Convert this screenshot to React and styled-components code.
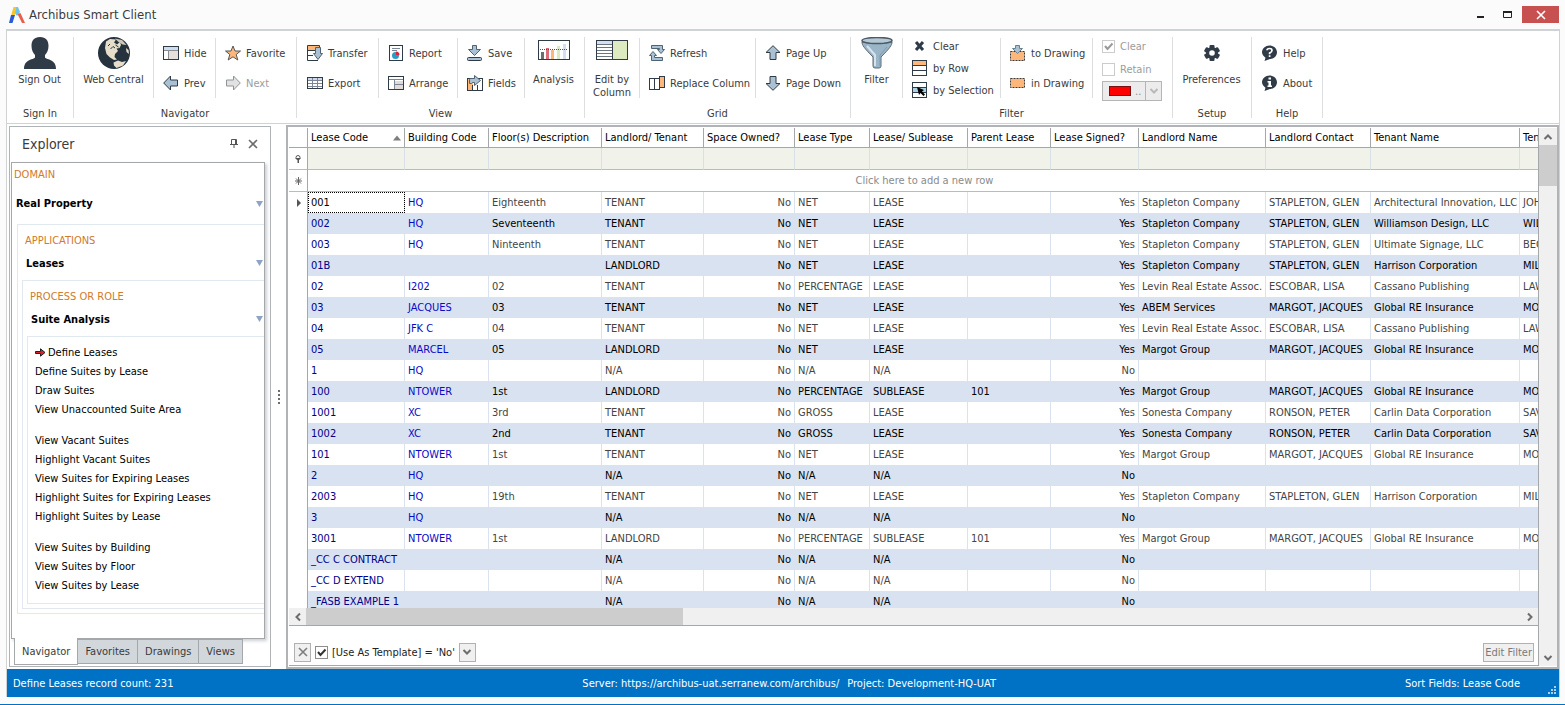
import { useState } from "react";
import styled, { createGlobalStyle, css } from "styled-components";

const Ink = "#2f3b47";
const Steel = "#a9c1d3";
const Orange = "#fdb77a";

const COLUMNS = [
    { title: "Lease Code", width: 97, sorted: true },
    { title: "Building Code", width: 84 },
    { title: "Floor(s) Description", width: 113 },
    { title: "Landlord/ Tenant", width: 102 },
    { title: "Space Owned?", width: 91, right: true },
    { title: "Lease Type", width: 75 },
    { title: "Lease/ Sublease", width: 98 },
    { title: "Parent Lease", width: 83 },
    { title: "Lease Signed?", width: 88, right: true },
    { title: "Landlord Name", width: 127 },
    { title: "Landlord Contact", width: 105 },
    { title: "Tenant Name", width: 149 },
    { title: "Ten" },
];

const ROWS = [
    ["001", "HQ", "Eighteenth", "TENANT", "No", "NET", "LEASE", "", "Yes", "Stapleton Company", "STAPLETON, GLEN", "Architectural Innovation, LLC", "JOH"],
    ["002", "HQ", "Seventeenth", "TENANT", "No", "NET", "LEASE", "", "Yes", "Stapleton Company", "STAPLETON, GLEN", "Williamson Design, LLC", "WIL"],
    ["003", "HQ", "Ninteenth", "TENANT", "No", "NET", "LEASE", "", "Yes", "Stapleton Company", "STAPLETON, GLEN", "Ultimate Signage, LLC", "BEC"],
    ["01B", "", "", "LANDLORD", "No", "NET", "LEASE", "", "Yes", "Stapleton Company", "STAPLETON, GLEN", "Harrison Corporation", "MIL"],
    ["02", "I202", "02", "TENANT", "No", "PERCENTAGE", "LEASE", "", "Yes", "Levin Real Estate Assoc.", "ESCOBAR, LISA", "Cassano Publishing", "LAW"],
    ["03", "JACQUES", "03", "TENANT", "No", "NET", "LEASE", "", "Yes", "ABEM Services", "MARGOT, JACQUES", "Global RE Insurance", "MO"],
    ["04", "JFK C", "04", "TENANT", "No", "NET", "LEASE", "", "Yes", "Levin Real Estate Assoc.", "ESCOBAR, LISA", "Cassano Publishing", "LAW"],
    ["05", "MARCEL", "05", "LANDLORD", "No", "NET", "LEASE", "", "Yes", "Margot Group", "MARGOT, JACQUES", "Global RE Insurance", "MO"],
    ["1", "HQ", "", "N/A", "No", "N/A", "N/A", "", "No", "", "", "", ""],
    ["100", "NTOWER", "1st", "LANDLORD", "No", "PERCENTAGE", "SUBLEASE", "101", "Yes", "Margot Group", "MARGOT, JACQUES", "Global RE Insurance", "MO"],
    ["1001", "XC", "3rd", "TENANT", "No", "GROSS", "LEASE", "", "Yes", "Sonesta Company", "RONSON, PETER", "Carlin Data Corporation", "SAV"],
    ["1002", "XC", "2nd", "TENANT", "No", "GROSS", "LEASE", "", "Yes", "Sonesta Company", "RONSON, PETER", "Carlin Data Corporation", "SAV"],
    ["101", "NTOWER", "1st", "TENANT", "No", "NET", "LEASE", "", "Yes", "Margot Group", "MARGOT, JACQUES", "Global RE Insurance", "MO"],
    ["2", "HQ", "", "N/A", "No", "N/A", "N/A", "", "No", "", "", "", ""],
    ["2003", "HQ", "19th", "TENANT", "No", "NET", "LEASE", "", "Yes", "Stapleton Company", "STAPLETON, GLEN", "Harrison Corporation", "MIL"],
    ["3", "HQ", "", "N/A", "No", "N/A", "N/A", "", "No", "", "", "", ""],
    ["3001", "NTOWER", "1st", "LANDLORD", "No", "PERCENTAGE", "SUBLEASE", "101", "Yes", "Margot Group", "MARGOT, JACQUES", "Global RE Insurance", "MO"],
    ["_CC C CONTRACT", "", "", "N/A", "No", "N/A", "N/A", "", "No", "", "", "", ""],
    ["_CC D EXTEND", "", "", "N/A", "No", "N/A", "N/A", "", "No", "", "", "", ""],
    ["_FASB EXAMPLE 1", "", "", "N/A", "No", "N/A", "N/A", "", "No", "", "", "", ""],
];

const TASKS = [
    ["Define Leases", "Define Suites by Lease", "Draw Suites", "View Unaccounted Suite Area"],
    [
        "View Vacant Suites",
        "Highlight Vacant Suites",
        "View Suites for Expiring Leases",
        "Highlight Suites for Expiring Leases",
        "Highlight Suites by Lease",
    ],
    ["View Suites by Building", "View Suites by Floor", "View Suites by Lease"],
];

/**
 * ICONS START
 */
const Svg = ({ w = 16, h = 16, children }) => (
    <svg width={w} height={h} viewBox={`0 0 ${w} ${h}`} fill="none" aria-hidden="true">
        {children}
    </svg>
);

const LogoIcon = () => (
    <Svg w={16} h={16}>
        <path d="M5 0H9L11 5L8 9L5 5Z" fill="#6cc5ee" />
        <path d="M4.500 0H7.500L5.500 9H2Z" fill="#f7c52c" />
        <path d="M2 8H6L3.500 16H0Z" fill="#2a5bd7" />
        <path d="M8.500 7L11.500 6L16 16H13Z" fill="#e8604c" />
    </Svg>
);

const UserIcon = () => (
    <Svg w={32} h={32}>
        <path
            d="M16 0C22 0 24.500 3.500 24.500 9C24.500 13 23 16 21 18V20.500C23 23 32 22 32 32H0C0 22 9 23 11 20.500V18C9 16 7.500 13 7.500 9C7.500 3.500 10 0 16 0Z"
            fill={Ink}
        />
    </Svg>
);

const GlobeIcon = () => (
    <Svg w={32} h={32}>
        <circle cx="16" cy="16" r="16" fill="#26333f" />
        <path
            d="M8 4.500L12 2L18 2.500L16 5.500L19 7.500L22 5L23 8L21.500 11L18.500 11.500L20 14L17 17L16.500 20L19 22.500L16 23L12 20.500L8.500 17L7 11Z"
            fill="#e6decb"
        />
        <path d="M17 1.500L24 3L28.500 8L24.500 7.500L20 4.500Z" fill="#cfc8b6" />
        <path d="M15.500 25.500L20 23.500L24 25L28 24L25 28.500L18.500 31L16 28.500Z" fill="#e6decb" />
        <path d="M28 11L30.500 13L31 17L28.500 15Z" fill="#e6decb" />
        <path d="M10 9L12 7M12.500 12L15 9.500L17 11M17.500 8L20.500 10" stroke="#26333f" />
    </Svg>
);

const HideIcon = () => (
    <Svg>
        <rect x="0.500" y="1.500" width="15" height="13" fill="#fff" stroke={Ink} />
        <rect x="1" y="2" width="14" height="3" fill="#ccdcf4" />
        <rect x="6" y="6" width="9" height="8" fill="#e6e0dc" />
        <path d="M1 5.500H15M5.500 6V14" stroke="#8c8c8c" />
    </Svg>
);

const ArrowIcon = ({ turn = 0, disabled }) => (
    <Svg>
        <path
            d="M0.700 8L7.500 1V5H14.500V11H7.500V15Z"
            fill={disabled ? "#e2e2e2" : Steel}
            stroke={disabled ? "#8f9498" : Ink}
            transform={`rotate(${turn} 8 8)`}
        />
    </Svg>
);

const StarIcon = () => (
    <Svg>
        <path d="M8 1L10 6H15.500L11.200 9.500L12.800 15L8 11.800L3.200 15L4.800 9.500L0.500 6H6Z" fill={Orange} stroke="#555" />
    </Svg>
);

const TransferIcon = () => (
    <Svg>
        <path d="M11 15.500H0.500V0.500H12.500V4" fill="#fff" stroke={Ink} />
        <rect x="1" y="1" width="11" height="4" fill={Orange} />
        <path d="M1 5.500H8M1 10.500H6" stroke={Ink} />
        <path d="M8.500 2.500H13.500V8.500H15.500L11 14.500L6.500 8.500H8.500Z" fill={Steel} stroke="#4e6475" />
    </Svg>
);

const ExportIcon = () => (
    <Svg>
        <rect x="0.500" y="2.500" width="15" height="11" fill="#fff" stroke={Ink} />
        <rect x="1" y="3" width="14" height="2" fill="#cdd9ea" />
        <path d="M1 5.500H15M1 8.500H15M1 11.500H15M5.500 3V13M10.500 3V13" stroke="#7b8794" />
        <rect x="0.500" y="2.500" width="15" height="11" stroke={Ink} />
    </Svg>
);

const ReportIcon = () => (
    <Svg>
        <rect x="1.500" y="0.500" width="13" height="15" fill="#fff" stroke={Ink} />
        <path d="M4 3.500H12M4 5.500H9" stroke="#7b8794" />
        <circle cx="7.500" cy="10.500" r="3.500" fill="#2b9bc4" />
        <path d="M8 10V6.500A3.500 3.500 0 0 1 11.500 10Z" fill="#d9263a" />
    </Svg>
);

const ArrangeIcon = () => (
    <Svg>
        <rect x="0.500" y="1.500" width="15" height="13" fill="#fff" stroke={Ink} />
        <rect x="7" y="6" width="8" height="8" fill="#dedbd9" />
        <path d="M1 4.500H15M6.500 5V14M7 9.500H15" stroke="#7b8794" />
    </Svg>
);

const SaveIcon = () => (
    <Svg>
        <path d="M5.500 0.500H9.500V4.500H13.500L7.500 10.500L1.500 4.500H5.500Z" fill={Steel} stroke="#4e6475" />
        <rect x="0.500" y="12.500" width="14" height="3" rx="1" fill={Steel} stroke={Ink} />
    </Svg>
);

const FieldsIcon = () => (
    <Svg>
        <rect x="0.500" y="3.500" width="15" height="12" fill="#fff" stroke={Ink} />
        <rect x="1" y="4" width="5" height="11" fill={Orange} />
        <path d="M5.500 10V15M10.500 10V15" stroke={Ink} />
        <path d="M2.500 8.500V4.500Q2.500 3.500 4 3.500H7.500V0.500L13.500 5.500L7.500 10.500V7.500H5.500L4.500 8.500Z" fill={Steel} stroke="#4e6475" />
    </Svg>
);

const AnalysisIcon = () => (
    <Svg w={32} h={32}>
        <rect x="0.500" y="3.500" width="31" height="19" fill="#fff" stroke={Ink} />
        <rect x="3" y="15" width="3" height="7" fill="#6d6d6d" />
        <rect x="8" y="11" width="3" height="11" fill="#dc6b7b" />
        <rect x="13" y="13" width="3" height="9" fill="#fdb77a" />
        <rect x="19" y="9" width="3" height="13" fill="#d9ebc0" />
        <rect x="25" y="7" width="3" height="15" fill="#d4dff2" />
        <path d="M2 12.500H30" stroke="#4b5056" strokeDasharray="1 1" />
    </Svg>
);

const EditColumnIcon = () => (
    <Svg w={32} h={32}>
        <rect x="0.500" y="3.500" width="31" height="19" fill="#fff" stroke={Ink} />
        <rect x="1" y="4" width="15" height="3" fill="#d4dff2" />
        <rect x="17" y="4" width="14" height="18" fill="#dcecc0" />
        <path d="M1 7.500H16M1 10.500H16M1 13.500H16M1 16.500H16M1 19.500H16" stroke="#6b757e" />
        <path d="M16.500 4V22" stroke={Ink} />
    </Svg>
);

const RefreshIcon = () => (
    <Svg>
        <path d="M2.500 0.500H13.500V4.500H15.500L12 8.500L8.500 4.500H10.500V3.500H2.500Z" fill={Steel} stroke="#4e6475" />
        <path d="M13.500 15.500H2.500V10.500H0.500L4 6.500L7.500 10.500H5.500V12.500H13.500Z" fill={Steel} stroke="#4e6475" />
    </Svg>
);

const ReplaceIcon = () => (
    <Svg>
        <rect x="0.500" y="3.500" width="5" height="11" fill="#fff" stroke={Ink} />
        <rect x="5.500" y="3.500" width="5" height="11" fill="#fff" stroke={Ink} />
        <rect x="10.500" y="1.500" width="5" height="11" fill={Orange} stroke={Ink} />
    </Svg>
);

const FunnelIcon = () => (
    <Svg w={32} h={32}>
        <path d="M1 5C1 8 3 11 12 20V29Q12 31 14 31H18Q20 31 20 29V20C29 11 31 8 31 5Z" fill="#9bb5c8" stroke="#5b6b77" />
        <ellipse cx="16" cy="3.500" rx="15" ry="3" fill="#b4c8d6" stroke="#4b5a66" strokeWidth="1.500" />
        <path d="M6 9L14 18V29" stroke="#d7e3ec" strokeWidth="2" />
        <path d="M26 10L19 18V29" stroke="#7f9bb0" />
    </Svg>
);

const ClearIcon = () => (
    <Svg>
        <path d="M4 4L11 12M11 4L4 12" stroke={Ink} strokeWidth="3" />
    </Svg>
);

const ByRowIcon = () => (
    <Svg>
        <rect x="0.500" y="0.500" width="14" height="15" fill="#fff" stroke={Ink} />
        <rect x="1" y="1" width="13" height="4" fill={Orange} />
        <path d="M1 5.500H14M1 10.500H14" stroke={Ink} />
    </Svg>
);

const BySelectionIcon = () => (
    <Svg>
        <rect x="0.500" y="0.500" width="14" height="15" fill="#fff" stroke={Ink} />
        <rect x="1" y="6" width="13" height="4" fill="#a9d3e4" />
        <path d="M1 5.500H14M1 10.500H14" stroke={Ink} />
        <path d="M5 5L12 8L10 9.500L13 12.500L11.500 14L8.500 11L7 13Z" fill="#000" />
    </Svg>
);

const ToDrawingIcon = () => (
    <Svg>
        <rect x="0.500" y="6.500" width="14" height="9" fill={Orange} stroke="#3b3b3b" strokeDasharray="2 1" />
        <path d="M5.500 0.500H9.500V3.500H12.500L7.500 8.500L2.500 3.500H5.500Z" fill={Steel} stroke="#6a7f8f" />
    </Svg>
);

const InDrawingIcon = () => (
    <Svg>
        <rect x="0.500" y="3.500" width="14" height="9" fill={Orange} stroke="#3b3b3b" strokeDasharray="2 1" />
    </Svg>
);

const GearIcon = () => (
    <Svg w={32} h={32}>
        {[0, 60, 120].map((a) => (
            <rect key={a} x="13.500" y="8" width="5" height="16" rx="1" fill={Ink} transform={`rotate(${a} 16 16)`} />
        ))}
        <circle cx="16" cy="16" r="6" fill={Ink} />
        <circle cx="16" cy="16" r="2.800" fill="#fff" />
    </Svg>
);

const BubbleIcon = ({ info }) => (
    <Svg>
        <path d="M7.500 0.500C11.500 0.500 15 3.500 15 7.300C15 11 12 14 8 14L2.500 16L3.500 12.700C1.500 11.500 0 9.500 0 7.300C0 3.500 3.500 0.500 7.500 0.500Z" fill={Ink} />
        {info ? (
            <path d="M6.500 2.500H9V4.500H6.500ZM5.500 6H9V10.500H10V12H5.500V10.500H6.500V7.500H5.500Z" fill="#fff" />
        ) : (
            <path d="M5 5.200Q5 3.500 7.500 3.500T10 5.500Q10 7 7.600 8V9.200M7.600 10.200V12" stroke="#fff" strokeWidth="1.700" />
        )}
    </Svg>
);

const Chevron = ({ turn = 0, color = "#6d6d6d" }) => (
    <Svg w={10} h={10}>
        <path d="M1.500 3L5 6.500L8.500 3" stroke={color} strokeWidth="2" transform={`rotate(${turn} 5 5)`} />
    </Svg>
);

const CloseIcon = ({ color = "#6d6d6d" }) => (
    <Svg w={10} h={10}>
        <path d="M1 1L9 9M9 1L1 9" stroke={color} strokeWidth="1.600" />
    </Svg>
);

const PinIcon = () => (
    <Svg w={8} h={9}>
        <path d="M1.500 0.500H6.500V5.500H1.500ZM0 5.500H8M4 6V9" stroke="#555" />
        <path d="M5.500 1V5" stroke="#555" />
    </Svg>
);

const MinimizeIcon = () => (
    <Svg w={10} h={10}>
        <rect x="2" y="6" width="7" height="2" fill="#222" />
    </Svg>
);

const MaximizeIcon = () => (
    <Svg w={10} h={10}>
        <path d="M0.500 1V7.500H8.500V1" stroke="#222" />
        <rect x="0" y="1" width="9" height="2" fill="#222" />
    </Svg>
);

const TriangleIcon = ({ up, color = "#8ea3c8" }) => (
    <Svg w={8} h={6}>
        <path d={up ? "M0 5.500L4 0.500L8 5.500Z" : "M0 0H7L3.500 6Z"} fill={color} />
    </Svg>
);

const CurrentTaskIcon = () => (
    <Svg w={11} h={9}>
        <path d="M0.500 3.500H5.500V0.800L10 4.500L5.500 8.200V5.500H0.500Z" fill="#d8232a" stroke="#222" />
    </Svg>
);

const FilterRowIcon = () => (
    <Svg w={8} h={8}>
        <circle cx="4" cy="2.500" r="2" fill="#fff" stroke="#555" />
        <path d="M1 3H7L5 5V8H3.500V5Z" fill="#555" />
    </Svg>
);

const NewRowIcon = () => (
    <Svg w={8} h={8}>
        <path d="M4.500 0V8M1 4H8M2 1.500L7 6.500M7 1.500L2 6.500" stroke="#666" />
    </Svg>
);

const PointerIcon = () => (
    <Svg w={5} h={8}>
        <path d="M1 0L5 4L1 8Z" fill="#555" />
    </Svg>
);

const GripIcon = () => (
    <Svg w={8} h={8}>
        {[[6, 0], [3, 3], [6, 3], [0, 6], [3, 6], [6, 6]].map(([x, y]) => (
            <rect key={`${x}-${y}`} x={x} y={y} width="2" height="2" fill="#a9d0ee" />
        ))}
    </Svg>
);

const SplitterIcon = () => (
    <Svg w={3} h={14}>
        {[0, 4, 8, 12].map((y) => (
            <rect key={y} x="1" y={y} width="2" height="2" fill="#6d6d6d" />
        ))}
    </Svg>
);
/**
 * ICONS END
 */

function Command({ icon, disabled, children }) {
    return (
        <CommandButton type="button" disabled={disabled}>
            {icon}
            <span>{children}</span>
        </CommandButton>
    );
}

function LargeCommand({ icon, children }) {
    return (
        <LargeButton type="button">
            {icon}
            <span>{children}</span>
        </LargeButton>
    );
}

function Tick({ id, checked, onChange, disabled }) {
    return (
        <TickBox>
            <input id={id} type="checkbox" checked={checked} onChange={onChange} disabled={disabled} readOnly={!onChange} />
            {checked && (
                <svg width="13" height="13" viewBox="0 0 13 13" fill="none" aria-hidden="true">
                    <path d="M3 6L5.500 9L10.500 3.500" stroke={disabled ? "#9a9a9a" : "#333"} strokeWidth="2" />
                </svg>
            )}
        </TickBox>
    );
}

function Ribbon() {
    return (
        <RibbonBar>
            <Group $width={67}>
                <Sections>
                    <Section $width={65}>
                        <LargeCommand icon={<UserIcon />}>Sign Out</LargeCommand>
                    </Section>
                </Sections>
                <GroupTitle>Sign In</GroupTitle>
            </Group>
            <Group $width={223}>
                <Sections>
                    <Section $width={79}>
                        <LargeCommand icon={<GlobeIcon />}>Web Central</LargeCommand>
                    </Section>
                    <Section $width={62} $pad={9}>
                        <Command icon={<HideIcon />}>Hide</Command>
                        <Command icon={<ArrowIcon />}>Prev</Command>
                    </Section>
                    <Section $width={81} $pad={9}>
                        <Command icon={<StarIcon />}>Favorite</Command>
                        <Command icon={<ArrowIcon turn={180} disabled />} disabled>
                            Next
                        </Command>
                    </Section>
                </Sections>
                <GroupTitle>Navigator</GroupTitle>
            </Group>
            <Group $width={288}>
                <Sections>
                    <Section $width={81} $pad={10}>
                        <Command icon={<TransferIcon />}>Transfer</Command>
                        <Command icon={<ExportIcon />}>Export</Command>
                    </Section>
                    <Section $width={79} $pad={9}>
                        <Command icon={<ReportIcon />}>Report</Command>
                        <Command icon={<ArrangeIcon />}>Arrange</Command>
                    </Section>
                    <Section $width={67} $pad={9}>
                        <Command icon={<SaveIcon />}>Save</Command>
                        <Command icon={<FieldsIcon />}>Fields</Command>
                    </Section>
                    <Section $width={58}>
                        <LargeCommand icon={<AnalysisIcon />}>Analysis</LargeCommand>
                    </Section>
                </Sections>
                <GroupTitle>View</GroupTitle>
            </Group>
            <Group $width={266}>
                <Sections>
                    <Section $width={54}>
                        <LargeCommand icon={<EditColumnIcon />}>Edit by Column</LargeCommand>
                    </Section>
                    <Section $width={116} $pad={9}>
                        <Command icon={<RefreshIcon />}>Refresh</Command>
                        <Command icon={<ReplaceIcon />}>Replace Column</Command>
                    </Section>
                    <Section $width={95} $pad={9}>
                        <Command icon={<ArrowIcon turn={90} />}>Page Up</Command>
                        <Command icon={<ArrowIcon turn={270} />}>Page Down</Command>
                    </Section>
                </Sections>
                <GroupTitle>Grid</GroupTitle>
            </Group>
            <Group $width={322}>
                <Sections>
                    <Section $width={51}>
                        <LargeCommand icon={<FunnelIcon />}>Filter</LargeCommand>
                    </Section>
                    <Section $width={98} $pad={9} $row={22}>
                        <Command icon={<ClearIcon />}>Clear</Command>
                        <Command icon={<ByRowIcon />}>by Row</Command>
                        <Command icon={<BySelectionIcon />}>by Selection</Command>
                    </Section>
                    <Section $width={92} $pad={9}>
                        <Command icon={<ToDrawingIcon />}>to Drawing</Command>
                        <Command icon={<InDrawingIcon />}>in Drawing</Command>
                    </Section>
                    <Section $width={80} $pad={9} $row={23}>
                        <Option>
                            <Tick id="clear-drawing" checked disabled />
                            <label htmlFor="clear-drawing">Clear</label>
                        </Option>
                        <Option>
                            <Tick id="retain-drawing" checked={false} disabled />
                            <label htmlFor="retain-drawing">Retain</label>
                        </Option>
                        <ColorField>
                            <Swatch />
                            <select aria-label="Highlight color" disabled>
                                <option>..</option>
                            </select>
                            <ColorArrow>
                                <Chevron color="#b9b9b9" />
                            </ColorArrow>
                        </ColorField>
                    </Section>
                </Sections>
                <GroupTitle>Filter</GroupTitle>
            </Group>
            <Group $width={79}>
                <Sections>
                    <Section $width={77}>
                        <LargeCommand icon={<GearIcon />}>Preferences</LargeCommand>
                    </Section>
                </Sections>
                <GroupTitle>Setup</GroupTitle>
            </Group>
            <Group $width={71}>
                <Sections>
                    <Section $width={70} $pad={10}>
                        <Command icon={<BubbleIcon />}>Help</Command>
                        <Command icon={<BubbleIcon info />}>About</Command>
                    </Section>
                </Sections>
                <GroupTitle>Help</GroupTitle>
            </Group>
        </RibbonBar>
    );
}

function Explorer() {
    const [tab, setTab] = useState("Navigator");
    return (
        <ExplorerPanel>
            <ExplorerHeader>
                <h2>Explorer</h2>
                <PlainButton type="button" aria-label="Pin">
                    <PinIcon />
                </PlainButton>
                <PlainButton type="button" aria-label="Close panel">
                    <CloseIcon />
                </PlainButton>
            </ExplorerHeader>
            <Tree>
                <Caption>DOMAIN</Caption>
                <Choice type="button" $tall>
                    Real Property <TriangleIcon />
                </Choice>
                <Level $gap={5}>
                    <Caption $inset>APPLICATIONS</Caption>
                    <Choice type="button" $inset>
                        Leases <TriangleIcon />
                    </Choice>
                    <Level $gap={4}>
                        <Caption $inset>PROCESS OR ROLE</Caption>
                        <Choice type="button" $inset>
                            Suite Analysis <TriangleIcon />
                        </Choice>
                        <TaskLevel>
                            {TASKS.map((group, g) => (
                                <TaskList key={group[0]}>
                                    {group.map((task, i) => (
                                        <li key={task}>
                                            <a href="#task">
                                                {g === 0 && i === 0 && <CurrentTaskIcon />}
                                                {task}
                                            </a>
                                        </li>
                                    ))}
                                </TaskList>
                            ))}
                        </TaskLevel>
                    </Level>
                </Level>
            </Tree>
            <Tabs role="tablist">
                {["Navigator", "Favorites", "Drawings", "Views"].map((name) => (
                    <Tab key={name} type="button" role="tab" aria-selected={tab === name} $active={tab === name} onClick={() => setTab(name)}>
                        {name}
                    </Tab>
                ))}
            </Tabs>
        </ExplorerPanel>
    );
}

function LeaseTable() {
    return (
        <Table>
            <colgroup>
                <col width="19" />
                {COLUMNS.map((c) => (
                    <col key={c.title} width={c.width} />
                ))}
            </colgroup>
            <thead>
                <tr>
                    <HeadCell />
                    {COLUMNS.map((c) => (
                        <HeadCell key={c.title} scope="col">
                            <HeadText>
                                {c.title}
                                {c.sorted && <TriangleIcon up color="#7d7d7d" />}
                            </HeadText>
                        </HeadCell>
                    ))}
                </tr>
                <tr>
                    <MarkCell $ruled>
                        <FilterRowIcon />
                    </MarkCell>
                    {COLUMNS.map((c) => (
                        <FilterCell key={c.title}>
                            <input aria-label={`Filter ${c.title}`} />
                        </FilterCell>
                    ))}
                </tr>
                <tr>
                    <MarkCell $ruled>
                        <NewRowIcon />
                    </MarkCell>
                    <NewRowCell colSpan={COLUMNS.length}>Click here to add a new row</NewRowCell>
                </tr>
            </thead>
            <tbody>
                {ROWS.map((row, r) => (
                    <Row key={row[0]} $alt={r % 2 === 1}>
                        <MarkCell>{r === 0 && <PointerIcon />}</MarkCell>
                        {row.map((value, c) => (
                            <Cell key={COLUMNS[c].title} $col={c} $right={COLUMNS[c].right} $focus={r === 0 && c === 0}>
                                {value}
                            </Cell>
                        ))}
                    </Row>
                ))}
            </tbody>
        </Table>
    );
}

function Grid() {
    const [applied, setApplied] = useState(true);
    return (
        <GridPanel>
            <GridMain>
                <TableView>
                    <LeaseTable />
                </TableView>
                <HScroll>
                    <ScrollButton type="button" aria-label="Scroll left">
                        <Chevron turn={90} />
                    </ScrollButton>
                    <HTrack>
                        <HThumb />
                    </HTrack>
                    <ScrollButton type="button" aria-label="Scroll right">
                        <Chevron turn={270} />
                    </ScrollButton>
                </HScroll>
                <FilterBar>
                    <SmallButton type="button" aria-label="Remove filter">
                        <CloseIcon color="#7d7d7d" />
                    </SmallButton>
                    <Tick id="use-filter" checked={applied} onChange={() => setApplied(!applied)} />
                    <label htmlFor="use-filter">[Use As Template] = 'No'</label>
                    <SmallButton type="button" aria-label="Recent filters">
                        <Chevron />
                    </SmallButton>
                    <EditButton type="button">Edit Filter</EditButton>
                </FilterBar>
            </GridMain>
            <VScroll>
                <ScrollButton type="button" aria-label="Scroll up">
                    <Chevron turn={180} />
                </ScrollButton>
                <VTrack>
                    <VThumb />
                </VTrack>
                <ScrollButton type="button" aria-label="Scroll down">
                    <Chevron />
                </ScrollButton>
            </VScroll>
        </GridPanel>
    );
}

export default function App() {
    return (
        <Page>
            <GlobalStyle />
            <TitleBar>
                <LogoIcon />
                <h1>Archibus Smart Client</h1>
                <WindowButton type="button" aria-label="Minimize">
                    <MinimizeIcon />
                </WindowButton>
                <WindowButton type="button" aria-label="Maximize">
                    <MaximizeIcon />
                </WindowButton>
                <WindowButton type="button" aria-label="Close" $close>
                    <CloseIcon color="#fff" />
                </WindowButton>
            </TitleBar>
            <Frame>
                <Ribbon />
                <Workspace>
                    <Explorer />
                    <Splitter>
                        <SplitterIcon />
                    </Splitter>
                    <Grid />
                </Workspace>
                <StatusBar>
                    <span>Define Leases record count: 231</span>
                    <StatusCenter>
                        <span>Server: https://archibus-uat.serranew.com/archibus/</span>
                        <span>Project: Development-HQ-UAT</span>
                    </StatusCenter>
                    <span>Sort Fields: Lease Code</span>
                    <Corner>
                        <GripIcon />
                    </Corner>
                </StatusBar>
            </Frame>
        </Page>
    );
}

/**
 * STYLE FOR THE COMPONENT START
 */
const GlobalStyle = createGlobalStyle`
    * { box-sizing: border-box; }
    body {
        margin: 0;
        background: #fbfbfc;
        color: #3b3b3b;
        font: 11px/13px "DejaVu Sans Condensed", "Noto Sans", sans-serif;
    }
    button, input, select { font: inherit; color: inherit; padding: 0; margin: 0; }
    svg { display: block; flex: none; }
`;

const Page = styled.div`
    height: 100vh;
    display: flex;
    flex-direction: column;
    padding-bottom: 7px;
    border-bottom: 1px solid #0072c6;
`;

const TitleBar = styled.header`
    height: 29px;
    flex: none;
    display: flex;
    align-items: center;
    padding: 0 6px 0 9px;

    h1 {
        flex: 1;
        margin: 0 0 0 4px;
        font-size: 13px;
        line-height: 16px;
        font-weight: normal;
    }
`;

const WindowButton = styled.button`
    width: ${(props) => (props.$close ? 37 : 28)}px;
    height: 17px;
    display: flex;
    justify-content: center;
    align-items: center;
    border: 0;
    background: ${(props) => (props.$close ? "#c75050" : "transparent")};
`;

const Frame = styled.div`
    flex: 1;
    min-height: 0;
    display: flex;
    flex-direction: column;
    margin: 0 5px 0 6px;
    border: 1px solid #d0d3d4;
    border-top-width: 2px;
    border-bottom: 0;
    background: #fff;
`;

const RibbonBar = styled.nav`
    flex: none;
    height: 93px;
    padding-top: 6px;
    display: flex;
    border-bottom: 1px solid #d0d3d4;
`;

const Group = styled.section`
    flex: none;
    width: ${(props) => props.$width}px;
    height: 81px;
    display: flex;
    flex-direction: column;
    justify-content: space-between;
    border-right: 1px solid #dcdee0;
`;

const Sections = styled.div`
    display: flex;
    padding-top: 1px;
`;

const GroupTitle = styled.div`
    text-align: center;
    line-height: 8px;
`;

const CommandButton = styled.button`
    flex: none;
    height: 30px;
    display: flex;
    align-items: center;
    gap: 5px;
    border: 0;
    background: transparent;
    white-space: nowrap;
    ${(props) => (props.disabled ? "color: #9c9c9c;" : "")}
`;

const Option = styled.div`
    flex: none;
    display: flex;
    align-items: center;
    gap: 5px;
    color: #9c9c9c;
`;

const Section = styled.div`
    width: ${(props) => props.$width}px;
    height: 60px;
    display: flex;
    flex-direction: column;
    justify-content: center;
    align-items: flex-start;
    padding-left: ${(props) => props.$pad || 0}px;

    & + & {
        border-left: 1px solid #dcdee0;
    }

    ${(props) =>
        props.$row &&
        css`
            ${CommandButton}, ${Option} {
                height: ${props.$row}px;
            }
        `}
`;

const LargeButton = styled.button`
    width: 100%;
    height: 62px;
    flex: none;
    display: flex;
    flex-direction: column;
    align-items: center;
    justify-content: flex-start;
    gap: 4px;
    border: 0;
    background: transparent;
`;

const TickBox = styled.span`
    position: relative;
    flex: none;
    width: 13px;
    height: 13px;

    input {
        appearance: none;
        display: block;
        width: 13px;
        height: 13px;
        border: 1px solid #8d8d8d;
        background: #fff;
    }
    input:disabled {
        border-color: #cccccc;
    }
    svg {
        position: absolute;
        top: 0;
        left: 0;
        pointer-events: none;
    }
`;

const ColorField = styled.div`
    width: 60px;
    height: 20px;
    flex: none;
    display: flex;
    align-items: center;
    border: 1px solid #b5b5b5;
    background: #ececec;

    select {
        flex: 1;
        min-width: 0;
        appearance: none;
        border: 0;
        padding-left: 4px;
        background: transparent;
        color: #8a8a8a;
        opacity: 1;
    }
`;

const Swatch = styled.span`
    width: 22px;
    height: 10px;
    margin-left: 6px;
    border: 1px solid #7a1010;
    background: #fe0000;
`;

const ColorArrow = styled.span`
    width: 16px;
    align-self: stretch;
    display: flex;
    align-items: center;
    justify-content: center;
    border-left: 1px solid #b5b5b5;
`;

const Workspace = styled.main`
    flex: 1;
    min-height: 0;
    display: flex;
`;

const ExplorerPanel = styled.aside`
    width: 262px;
    flex: none;
    margin: 2px 0 2px 2px;
    border: 1px solid #b1b4b6;
    display: flex;
    flex-direction: column;
`;

const ExplorerHeader = styled.header`
    height: 35px;
    flex: none;
    display: flex;
    align-items: center;
    gap: 10px;
    padding: 0 12px 2px;

    h2 {
        flex: 1;
        margin: 0;
        font-size: 14px;
        line-height: 18px;
        font-weight: normal;
    }
`;

const PlainButton = styled.button`
    border: 0;
    background: transparent;
`;

const Tree = styled.div`
    flex: 1;
    min-height: 0;
    margin: 0 5px 0 1px;
    padding-top: 4px;
    border: 1px solid #a5a8ab;
    box-shadow: 2px 2px 3px rgba(90, 100, 120, 0.3);
`;

const Caption = styled.div`
    padding-left: ${(props) => (props.$inset ? 7 : 2)}px;
    line-height: 16px;
    color: #d07a2b;
`;

const Choice = styled.button`
    width: 100%;
    height: ${(props) => (props.$tall ? 41 : 28)}px;
    margin-bottom: ${(props) => (props.$tall ? 0 : 3)}px;
    display: flex;
    align-items: center;
    justify-content: space-between;
    padding-left: ${(props) => (props.$inset ? 8 : 4)}px;
    border: 0;
    background: transparent;
    color: #000;
    font-weight: bold;
`;

const Level = styled.div`
    margin-left: ${(props) => props.$gap}px;
    padding: 8px 0 4px;
    border: 1px solid #e2e8ef;
    border-right: 0;
`;

const TaskLevel = styled.div`
    margin-left: 4px;
    padding: 6px 0 8px;
    border: 1px solid #e2e8ef;
    border-right: 0;
`;

const TaskList = styled.ul`
    list-style: none;
    margin: 0;
    padding: 0 0 0 7px;

    & + & {
        padding-top: 12px;
    }
    a {
        display: flex;
        align-items: center;
        gap: 2px;
        line-height: 19px;
        color: #000;
        text-decoration: none;
    }
`;

const Tabs = styled.div`
    flex: none;
    height: 27px;
    display: flex;
    align-items: flex-start;
    padding-left: 4px;
`;

const Tab = styled.button`
    position: relative;
    height: 25px;
    padding: 0 7px;
    border: 1px solid #a5a8ab;
    border-left-width: 0;
    background: #d2d7dc;

    ${(props) =>
        props.$active &&
        css`
            height: 27px;
            margin-top: -1px;
            border-left-width: 1px;
            border-top: 0;
            background: #fff;
        `}
`;

const Splitter = styled.div`
    width: 15px;
    flex: none;
    display: flex;
    align-items: center;
    justify-content: center;
`;

const GridPanel = styled.section`
    flex: 1;
    min-width: 0;
    margin-top: 1px;
    padding: 1px 0 1px 1px;
    display: flex;
    border: 2px solid #b1b4b6;
`;

const GridMain = styled.div`
    flex: 1;
    min-width: 0;
    display: flex;
    flex-direction: column;
    border: 1px solid #a5a8ab;
    border-width: 0 1px 1px 0;
`;

const TableView = styled.div`
    flex: 1;
    min-height: 0;
    overflow: hidden;
`;

const Table = styled.table`
    width: 100%;
    table-layout: fixed;
    border-collapse: separate;
    border-spacing: 0;
    white-space: nowrap;

    td, th {
        padding: 0 3px;
        overflow: hidden;
    }
    tr > :last-child {
        border-right: 0;
        padding-right: 0;
    }
`;

const HeadCell = styled.th`
    height: 20px;
    border-right: 1px solid #a5a8ab;
    border-bottom: 1px solid #a5a8ab;
    color: #000;
    font-weight: normal;
    text-align: left;
`;

const HeadText = styled.span`
    display: flex;
    align-items: center;
    justify-content: space-between;
`;

const MarkCell = styled.td`
    height: ${(props) => (props.$ruled ? 22 : 21)}px;
    border-right: 1px solid #a5a8ab;
    ${(props) => (props.$ruled ? "border-bottom: 1px solid #b9bcbf;" : "")}

    svg {
        margin: 0 auto;
    }
`;

const FilterCell = styled.td`
    border-right: 1px solid #d9e0e8;
    border-bottom: 1px solid #b9bcbf;
    background: #f1f3ea;

    input {
        display: block;
        width: 100%;
        border: 0;
        background: transparent;
    }
`;

const NewRowCell = styled.td`
    border-bottom: 1px solid #b9bcbf;
    color: #8a8a8a;
    text-align: center;
`;

const Row = styled.tr`
    color: ${(props) => (props.$alt ? "#000" : "#444")};

    td + td {
        background: ${(props) => (props.$alt ? "#d9e2f1" : "#fff")};
    }
`;

const cellColor = { 0: "#00008b", 1: "#0a0ac8" };
const Cell = styled.td`
    border-right: 1px solid #d9e2ee;
    text-align: ${(props) => (props.$right ? "right" : "left")};
    ${(props) => (cellColor[props.$col] ? `color: ${cellColor[props.$col]};` : "")}
    ${(props) => (props.$focus ? "outline: 1px dotted #000; outline-offset: -1px; color: #000;" : "")}
`;

const HScroll = styled.div`
    height: 18px;
    flex: none;
    display: flex;
    border-bottom: 1px solid #a5a8ab;
    background: #f0f0f0;
`;

const ScrollButton = styled.button`
    width: 17px;
    height: 17px;
    flex: none;
    display: flex;
    align-items: center;
    justify-content: center;
    border: 0;
    background: transparent;
`;

const HTrack = styled.div`
    flex: 1;
`;

const HThumb = styled.div`
    width: 31%;
    height: 100%;
    background: #cdcdcd;
`;

const VScroll = styled.div`
    width: 18px;
    flex: none;
    display: flex;
    flex-direction: column;
    background: #f0f0f0;
`;

const VTrack = styled.div`
    flex: 1;
`;

const VThumb = styled.div`
    width: 100%;
    height: 41px;
    background: #cdcdcd;
`;

const FilterBar = styled.div`
    height: 39px;
    flex: none;
    display: flex;
    align-items: center;
    gap: 4px;
    padding: 13px 4px 0 5px;
    color: #222;
`;

const SmallButton = styled.button`
    width: 17px;
    height: 19px;
    display: flex;
    align-items: center;
    justify-content: center;
    border: 1px solid #b1b1b1;
    background: #f0f0f0;
`;

const EditButton = styled.button`
    height: 19px;
    margin-left: auto;
    padding: 0 1px;
    border: 1px solid #b1b1b1;
    background: #f0f0f0;
    color: #7a7a7a;
`;

const StatusBar = styled.footer`
    height: 28px;
    flex: none;
    position: relative;
    display: flex;
    align-items: center;
    justify-content: space-between;
    padding: 0 39px 0 6px;
    background: #0072c6;
    color: #fff;
`;

const StatusCenter = styled.span`
    display: flex;
    gap: 8px;
`;

const Corner = styled.span`
    position: absolute;
    right: 3px;
    bottom: 3px;
`;
/**
 * STYLE FOR THE COMPONENT END
 */
